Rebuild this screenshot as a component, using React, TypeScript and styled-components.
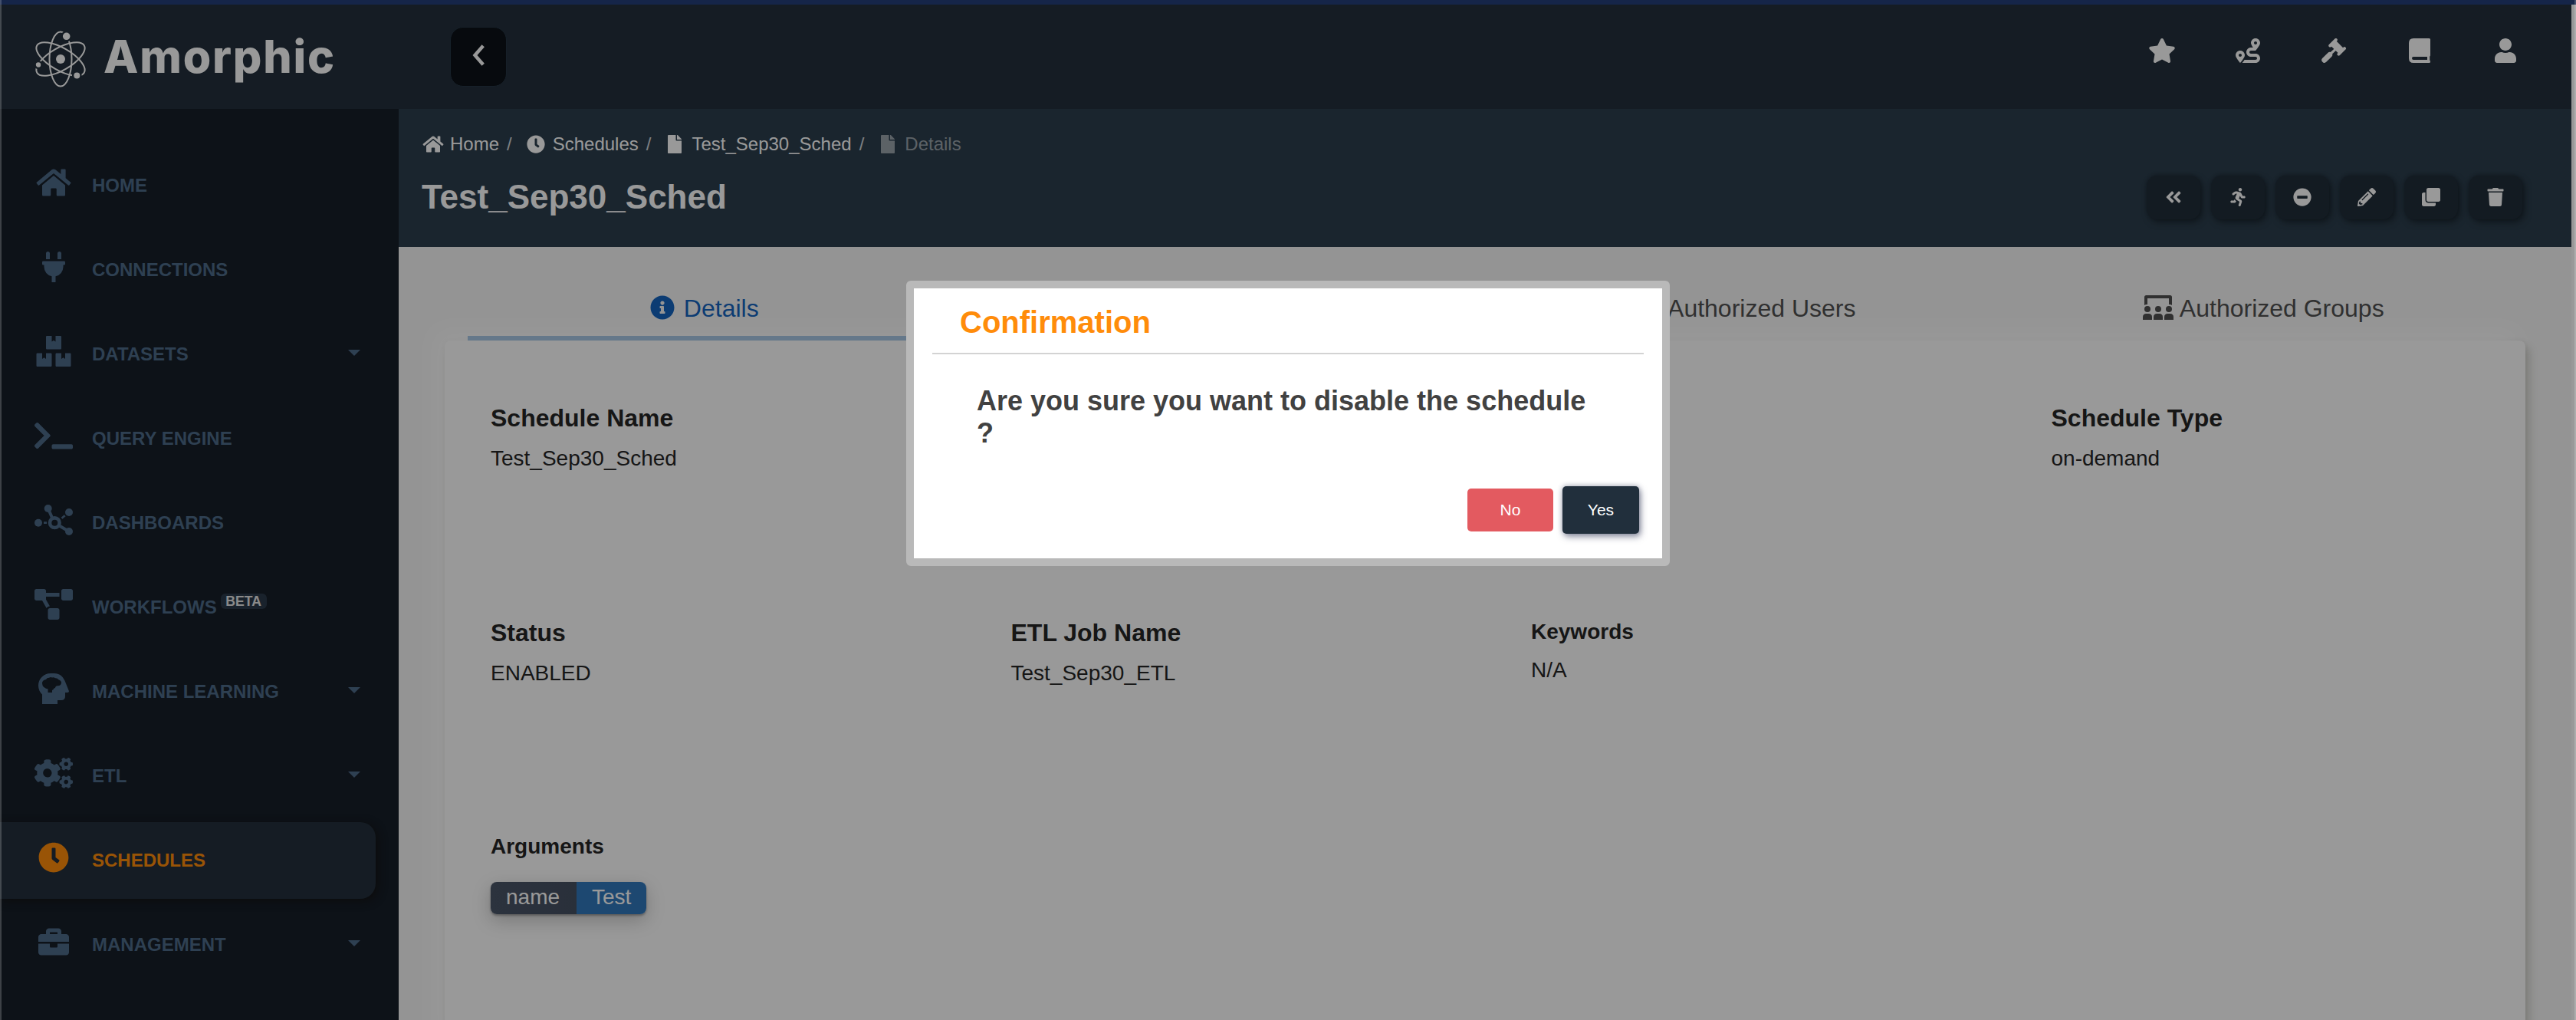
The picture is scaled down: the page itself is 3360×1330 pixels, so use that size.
import React, { useState } from "react";
import styled, { createGlobalStyle, css } from "styled-components";
import {
  FaAngleDoubleLeft,
  FaBoxes,
  FaBriefcase,
  FaClock,
  FaClone,
  FaCogs,
  FaFile,
  FaHome,
  FaInfoCircle,
  FaMinusCircle,
  FaPencilAlt,
  FaPlug,
  FaProjectDiagram,
  FaRoute,
  FaRunning,
  FaStar,
  FaTerminal,
  FaTrash,
  FaUser,
} from "react-icons/fa";

const NetworkIcon = () => (
  <svg viewBox="0 0 50 40" fill="currentColor" stroke="currentColor">
    <g strokeWidth="4">
      <path d="M17.7 5l5.5 12.5M31.5 27L45 35" />
    </g>
    <path d="M12 23.7h4M35.5 17.8l4.2-3.6" strokeWidth="2.8" />
    <circle cx="26.3" cy="23.7" r="6.3" fill="none" strokeWidth="4.6" />
    <g stroke="none">
      <circle cx="17.7" cy="5" r="5" />
      <circle cx="45" cy="10" r="5" />
      <circle cx="5" cy="23.7" r="5" />
      <circle cx="45" cy="35" r="5" />
    </g>
  </svg>
);

const HeadBrainIcon = () => (
  <svg viewBox="0 0 40 40" fill="currentColor" fillRule="evenodd">
    <path d="M5 40V27.500C2 25 0 20.500 0 16 0 7 7 0 16 0h4.500C29 0 33 5.500 35.500 12L40 23.200Q40 25 38.200 25H35v5q0 5-5 5h-5v5zM10 8Q6 8.500 5 12q0 5 3 6.500 2 2 4.500 1.800V25H18v-3q1.500-.5 2.500-2.500 1.700 0 2-2 1-1.500 3-1.300 4 0 4.500-3.700 0-3-3.500-4.200-1.500-2.300-4.500-2-1.500-1.500-4-.8-2-1.200-4 .3Q11 5.800 10 8z" />
  </svg>
);

const GavelIcon = () => (
  <svg viewBox="0 0 32 32" stroke="currentColor" strokeLinecap="round" fill="none">
    <path d="M11.300 9.500l7.500-7.500M22.500 20.700L30 13.200" strokeWidth="4" />
    <path d="M15.500 6.300l10.200 10.200" strokeWidth="9.500" strokeLinecap="butt" />
    <path d="M18 14.500L11 21" strokeWidth="3.200" />
    <path d="M10.700 21.500L3.800 28.300" strokeWidth="7" />
  </svg>
);

const BookIcon = () => (
  <svg viewBox="0 0 28 32" fill="currentColor" fillRule="evenodd">
    <path d="M6 0h20.500Q28 0 28 1.500V22q0 1-.8 1.500v5q.8.500.8 1.500v.5q0 1.500-1.500 1.500H6q-6 0-6-6V6q0-6 6-6zM6 24a2 2 0 0 0 0 4h18v-4z" />
  </svg>
);

const UsersClassIcon = () => (
  <svg viewBox="0 0 40 32" fill="currentColor">
    <path d="M2 13V2.500Q2 0 4.500 0h31Q38 0 38 2.500V13q-1.500-1.200-4-1V4H6v8q-2.500-.2-4 1z" />
    {[6, 20, 34].map((x) => (
      <g key={x}>
        <circle cx={x} cy="18" r="4" />
        <path d={`M${x - 6} 32v-3.500q0-4.500 4.500-4.500h3q4.500 0 4.500 4.500V32z`} />
      </g>
    ))}
  </svg>
);

const AtomLogo = () => (
  <svg viewBox="0 0 68 76" width="68" height="76" fill="none" stroke="#fff" strokeWidth="2">
    <ellipse cx="34" cy="38" rx="14.500" ry="35.500" />
    <ellipse cx="34" cy="38" rx="14.500" ry="35.500" transform="rotate(60 34 38)" />
    <ellipse cx="34" cy="38" rx="14.500" ry="35.500" transform="rotate(-60 34 38)" />
    <g fill="#fff" stroke="#23303c" strokeWidth="2.400">
      <circle cx="41.700" cy="8.300" r="6" />
      <circle cx="5" cy="45.500" r="4.400" />
      <circle cx="55.300" cy="59.500" r="5.200" />
    </g>
    <circle cx="34" cy="38" r="6" fill="#fff" stroke="none" />
  </svg>
);

const NAV_ITEMS = [
  { label: "HOME", icon: <FaHome /> },
  { label: "CONNECTIONS", icon: <FaPlug /> },
  { label: "DATASETS", icon: <FaBoxes />, hasMenu: true },
  { label: "QUERY ENGINE", icon: <FaTerminal /> },
  { label: "DASHBOARDS", icon: <NetworkIcon /> },
  { label: "WORKFLOWS", icon: <FaProjectDiagram />, badge: "BETA" },
  { label: "MACHINE LEARNING", icon: <HeadBrainIcon />, hasMenu: true },
  { label: "ETL", icon: <FaCogs />, hasMenu: true },
  { label: "SCHEDULES", icon: <FaClock /> },
  { label: "MANAGEMENT", icon: <FaBriefcase />, hasMenu: true },
];

const BREADCRUMBS = [
  { label: "Home", icon: <FaHome /> },
  { label: "Schedules", icon: <FaClock /> },
  { label: "Test_Sep30_Sched", icon: <FaFile /> },
  { label: "Details", icon: <FaFile /> },
];

const TABS = [
  { label: "Details", icon: <FaInfoCircle /> },
  { label: "Executions", icon: <FaRunning /> },
  { label: "Authorized Users", icon: <UsersClassIcon /> },
  { label: "Authorized Groups", icon: <UsersClassIcon /> },
];

const TOP_ICONS = [<FaStar />, <FaRoute />, <GavelIcon />, <BookIcon />, <FaUser />];

const ACTIONS = [<FaAngleDoubleLeft />, <FaRunning />, <FaMinusCircle />, <FaPencilAlt />, <FaClone />, <FaTrash />];

const App: React.FC = () => {
  const [activeNav, setActiveNav] = useState("SCHEDULES");
  const [activeTab, setActiveTab] = useState("Details");
  const [isDialogOpen, setIsDialogOpen] = useState<boolean>(true);

  return (
    <Page>
      <GlobalStyle />
      <TopStripe />
      <Shell>
        <Header>
          <Brand>
            <AtomLogo />
            <BrandName>Amorphic</BrandName>
          </Brand>
          <CollapseButton>
            <svg viewBox="0 0 16 28" width="16" height="28" fill="none" stroke="#fff" strokeWidth="4.500">
              <path d="M14.200 1.800L3.500 14l10.700 12.200" />
            </svg>
          </CollapseButton>
          <TopIcons>
            {TOP_ICONS.map((icon, index) => (
              <TopIcon key={"top-icon" + index}>{icon}</TopIcon>
            ))}
          </TopIcons>
        </Header>
        <Body>
          <Sidebar>
            {NAV_ITEMS.map((item) => (
              <NavItem key={item.label} $active={item.label === activeNav} onClick={() => setActiveNav(item.label)}>
                <NavIcon>{item.icon}</NavIcon>
                <NavLabel>{item.label}</NavLabel>
                {item.badge && <Beta>{item.badge}</Beta>}
                {item.hasMenu && <Caret />}
              </NavItem>
            ))}
          </Sidebar>
          <Main>
            <PageHeader>
              <Breadcrumbs>
                {BREADCRUMBS.map((crumb, index) => (
                  <React.Fragment key={crumb.label}>
                    {index > 0 && <Slash>/</Slash>}
                    <Crumb $current={index === BREADCRUMBS.length - 1}>
                      <CrumbIcon>{crumb.icon}</CrumbIcon>
                      {crumb.label}
                    </Crumb>
                  </React.Fragment>
                ))}
              </Breadcrumbs>
              <TitleRow>
                <Title>Test_Sep30_Sched</Title>
                <Actions>
                  {ACTIONS.map((icon, index) => (
                    <ActionButton key={"action" + index}>{icon}</ActionButton>
                  ))}
                </Actions>
              </TitleRow>
            </PageHeader>
            <Content>
              <Tabs>
                {TABS.map((tab) => (
                  <Tab key={tab.label} $active={tab.label === activeTab} onClick={() => setActiveTab(tab.label)}>
                    <TabIcon>{tab.icon}</TabIcon>
                    {tab.label}
                  </Tab>
                ))}
              </Tabs>
              <Card>
                <Field $column={1}>
                  <Label>Schedule Name</Label>
                  <Value>Test_Sep30_Sched</Value>
                </Field>
                <Field $column={4}>
                  <Label>Schedule Type</Label>
                  <Value>on-demand</Value>
                </Field>
                <Field $column={1}>
                  <Label>Status</Label>
                  <Value>ENABLED</Value>
                </Field>
                <Field $column={2}>
                  <Label>ETL Job Name</Label>
                  <Value>Test_Sep30_ETL</Value>
                </Field>
                <Field $column={3}>
                  <SmallLabel>Keywords</SmallLabel>
                  <Value>N/A</Value>
                </Field>
                <Field $column={1}>
                  <SmallLabel>Arguments</SmallLabel>
                  <Argument>
                    <ArgumentName>name</ArgumentName>
                    <ArgumentValue>Test</ArgumentValue>
                  </Argument>
                </Field>
              </Card>
            </Content>
          </Main>
        </Body>
      </Shell>
      {isDialogOpen && (
        <Overlay>
          <Dialog>
            <DialogTitle>Confirmation</DialogTitle>
            <DialogMessage>Are you sure you want to disable the schedule ?</DialogMessage>
            <DialogButtons>
              <NoButton onClick={() => setIsDialogOpen(false)}>No</NoButton>
              <YesButton onClick={() => setIsDialogOpen(false)}>Yes</YesButton>
            </DialogButtons>
          </Dialog>
        </Overlay>
      )}
      <WindowEdge $side="left" />
      <WindowEdge $side="right" />
    </Page>
  );
};

const GlobalStyle = createGlobalStyle`
  * {
    box-sizing: border-box;
  }
  body {
    margin: 0;
    font-family: "Liberation Sans", Arial, sans-serif;
  }
  button {
    border: none;
    padding: 0;
    font-family: inherit;
  }
  svg {
    display: block;
    flex-shrink: 0;
  }
`;

const Page = styled.div`
  width: 100%;
  height: 1330px;
  overflow: hidden;
  position: relative;
  background-color: #fff;
`;

const TopStripe = styled.div`
  height: 6px;
  background-color: #233f7b;
`;

const Shell = styled.div`
  height: 1324px;
  margin-right: 6px;
  display: flex;
  flex-direction: column;
`;

const Header = styled.header`
  height: 136px;
  flex-shrink: 0;
  display: flex;
  align-items: flex-start;
  background-color: #23303c;
`;

const Brand = styled.div`
  width: 588px;
  padding: 33px 0 0 45px;
  display: flex;
`;

const BrandName = styled.div`
  margin: 4px 0 0 22px;
  font-family: Inter, sans-serif;
  font-size: 59px;
  line-height: 62px;
  font-weight: 800;
  letter-spacing: 1.800px;
  color: #fff;
`;

const CollapseButton = styled.button`
  width: 74px;
  height: 78px;
  margin: 29px 0 0 -1px;
  padding-bottom: 4px;
  display: flex;
  align-items: center;
  justify-content: center;
  border: 1px solid #263645;
  border-radius: 17px;
  background-color: #0c1218;
`;

const TopIcons = styled.div`
  margin: 44px 58px 0 auto;
  display: flex;
  gap: 56px;
`;

const TopIcon = styled.div`
  width: 56px;
  color: #fff;
  svg {
    height: 32px;
    width: 100%;
  }
`;

const Body = styled.div`
  flex: 1;
  min-height: 0;
  display: flex;
`;

const Sidebar = styled.nav`
  width: 520px;
  flex-shrink: 0;
  padding: 50px 30px 0 0;
  display: flex;
  flex-direction: column;
  gap: 10px;
  background-color: #161e28;
`;

const NavItem = styled.div<{ $active: boolean }>`
  height: 100px;
  flex-shrink: 0;
  padding: 0 20px 0 45px;
  display: flex;
  align-items: center;
  color: #4e6b89;
  cursor: pointer;
  ${(props) =>
    props.$active &&
    css`
      color: #ff8c0a;
      background-color: #23303c;
      border-radius: 0 20px 20px 0;
      box-shadow: 3px 3px 12px rgba(20, 20, 20, 0.9);
    `}
`;

const NavIcon = styled.div`
  width: 50px;
  margin: 0 25px 8px 0;
  svg {
    height: 40px;
    width: 100%;
  }
`;

const NavLabel = styled.span`
  font-size: 24px;
  line-height: 28px;
  font-weight: bold;
`;

const Beta = styled.span`
  width: 60px;
  height: 20px;
  margin: 0 0 16px 5px;
  border-radius: 6px;
  background-color: #2b3a4a;
  color: #e6e6e6;
  font-size: 17.600px;
  line-height: 20px;
  font-weight: bold;
  text-align: center;
`;

const Caret = styled.span`
  margin: 0 0 4px auto;
  border: 8px solid transparent;
  border-top-color: #4e6b89;
  border-bottom-width: 0;
`;

const Main = styled.main`
  flex: 1;
  min-width: 0;
  display: flex;
  flex-direction: column;
`;

const PageHeader = styled.section`
  height: 180px;
  flex-shrink: 0;
  padding: 32px 64px 0 30px;
  background-color: #2c3e4d;
`;

const Breadcrumbs = styled.div`
  height: 28px;
  display: flex;
  align-items: center;
  font-size: 24px;
  line-height: 28px;
  color: #fff;
`;

const Crumb = styled.span<{ $current: boolean }>`
  display: flex;
  align-items: center;
  gap: 7px;
  color: ${(props) => (props.$current ? "#9aa3ab" : "#fff")};
`;

const CrumbIcon = styled.span`
  width: 30px;
  svg {
    height: 24px;
    width: 100%;
  }
`;

const Slash = styled.span`
  margin: 0 16px 0 10px;
  color: #d0d5d9;
`;

const TitleRow = styled.div`
  height: 58px;
  margin-top: 26px;
  display: flex;
  align-items: center;
  justify-content: space-between;
`;

const Title = styled.h1`
  margin: 0;
  font-size: 44px;
  line-height: 50px;
  color: #fff;
`;

const Actions = styled.div`
  display: flex;
  gap: 14px;
`;

const ActionButton = styled.button`
  width: 70px;
  height: 57px;
  display: flex;
  align-items: center;
  justify-content: center;
  border-radius: 14px;
  background-color: #212d39;
  box-shadow: 3px 4px 9px rgba(10, 15, 20, 0.5), 0 -1px 5px rgba(10, 15, 20, 0.3);
  color: #fff;
  svg {
    height: 24px;
    width: 100%;
  }
`;

const Content = styled.section`
  flex: 1;
  min-height: 0;
  padding: 0 60px;
  display: flex;
  flex-direction: column;
  background-color: #f7f7f7;
`;

const Tabs = styled.div`
  height: 122px;
  flex-shrink: 0;
  display: grid;
  grid-template-columns: repeat(4, 1fr);
  position: relative;
  z-index: 1;
`;

const Tab = styled.div<{ $active: boolean }>`
  margin: 0 30px;
  padding: 44px 5px 0 0;
  display: flex;
  align-items: center;
  justify-content: center;
  gap: 8px;
  font-size: 32px;
  line-height: 38px;
  color: ${(props) => (props.$active ? "#1565c0" : "#505050")};
  border-bottom: 6px solid ${(props) => (props.$active ? "#a9c9e6" : "transparent")};
`;

const TabIcon = styled.span`
  width: 40px;
  margin-bottom: 2px;
  svg {
    height: 32px;
    width: 100%;
  }
`;

const Card = styled.div`
  flex: 1;
  padding: 82px 0 0 60px;
  display: grid;
  grid-template-columns: repeat(4, 678.500px);
  grid-auto-rows: 280px;
  border-radius: 8px 8px 0 0;
  background-color: #fff;
  box-shadow: 5px 8px 12px rgba(70, 70, 40, 0.22), -12px -12px 30px #fff, 0 0 6px rgba(0, 0, 0, 0.08);
`;

const Field = styled.div<{ $column: number }>`
  grid-column: ${(props) => props.$column};
  color: #262626;
`;

const Label = styled.div`
  margin-bottom: 17px;
  font-size: 32px;
  line-height: 38px;
  font-weight: bold;
`;

const SmallLabel = styled.div`
  margin-bottom: 15px;
  font-size: 28px;
  line-height: 36px;
  font-weight: bold;
`;

const Value = styled.div`
  font-size: 28px;
  line-height: 34px;
`;

const Argument = styled.div`
  width: fit-content;
  height: 42px;
  margin-top: 28px;
  display: flex;
  overflow: hidden;
  border-radius: 8px;
  box-shadow: 0 2px 3px rgba(0, 0, 0, 0.3), 0 8px 24px rgba(0, 0, 0, 0.22);
  color: #fff;
  font-size: 28px;
  line-height: 40px;
`;

const ArgumentName = styled.span`
  padding: 0 22px 0 20px;
  background: linear-gradient(90deg, #4a5568, #455062);
`;

const ArgumentValue = styled.span`
  padding: 0 20px;
  background-color: #3178bd;
`;

const Overlay = styled.div`
  position: absolute;
  inset: 0;
  z-index: 10;
  padding-top: 366px;
  display: flex;
  align-items: flex-start;
  justify-content: center;
  background-color: rgba(0, 0, 0, 0.4);
`;

const Dialog = styled.div`
  width: 996px;
  height: 372px;
  border: 10px solid #b9b9b9;
  border-radius: 6px;
  background-color: #fff;
`;

const DialogTitle = styled.h2`
  height: 86px;
  margin: 0 24px;
  padding: 20px 36px 0;
  border-bottom: 2px solid #d3d3d3;
  color: #ff8c0a;
  font-size: 40px;
  line-height: 48px;
`;

const DialogMessage = styled.p`
  margin: 40px 82px 48px;
  color: #414141;
  font-size: 36px;
  line-height: 42px;
  font-weight: bold;
`;

const DialogButtons = styled.div`
  padding-right: 30px;
  display: flex;
  align-items: center;
  justify-content: flex-end;
  gap: 12px;
`;

const NoButton = styled.button`
  width: 112px;
  height: 56px;
  border-radius: 5px;
  background-color: #e35a60;
  color: #fff;
  font-size: 21px;
`;

const YesButton = styled(NoButton)`
  width: 100px;
  height: 62px;
  background-color: #212f3c;
  box-shadow: 2px 4px 8px rgba(40, 45, 80, 0.5), 0 -1px 6px rgba(40, 45, 80, 0.3);
`;

const WindowEdge = styled.div<{ $side: "left" | "right" }>`
  position: absolute;
  top: 0;
  bottom: 0;
  ${(props) => props.$side}: 0;
  z-index: 20;
  width: 2px;
  background-color: rgba(255, 255, 255, 0.2);
`;

export default App;
